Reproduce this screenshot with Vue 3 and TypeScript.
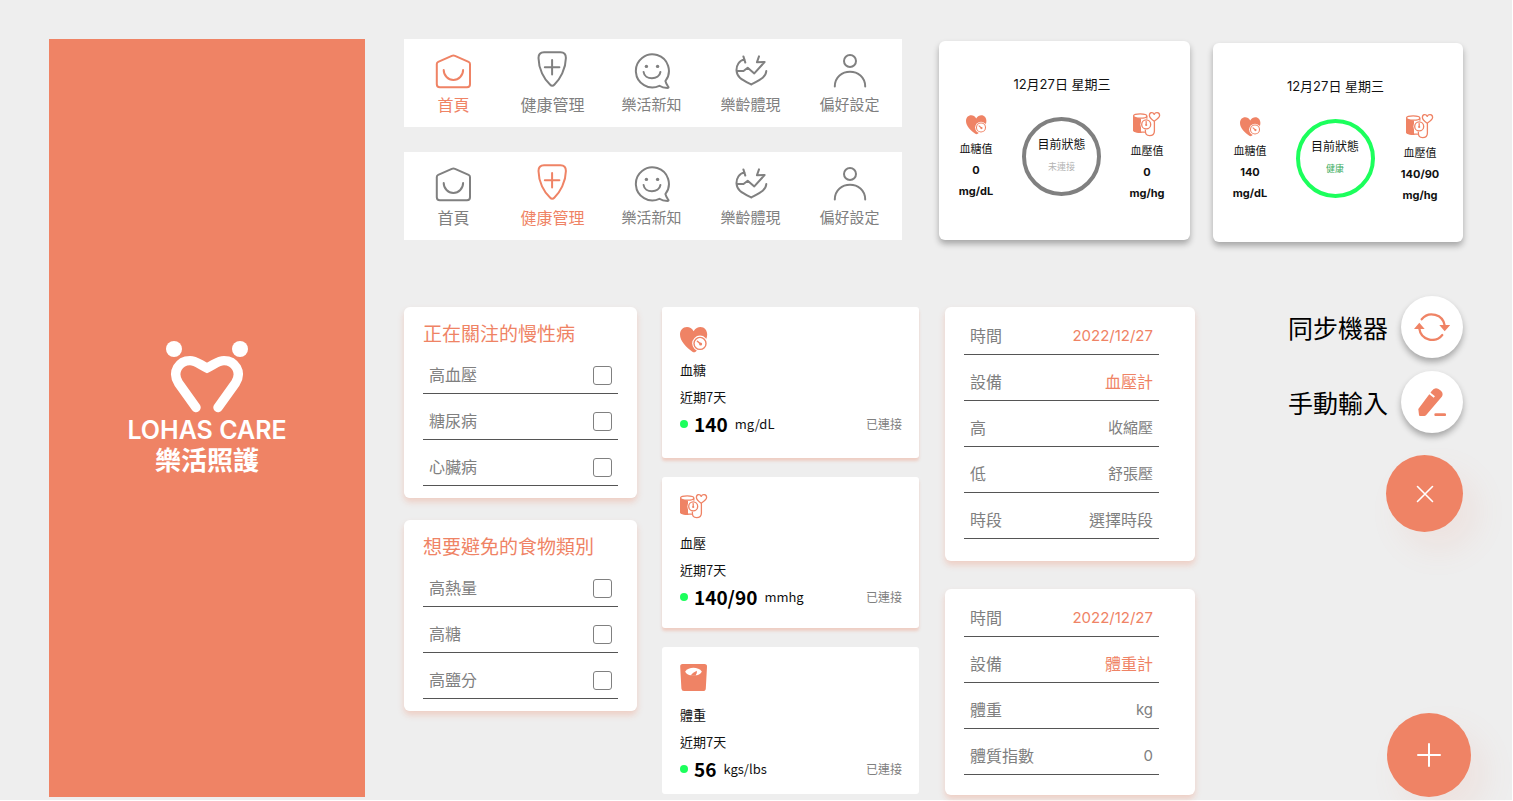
<script setup lang="ts">
import { h, ref, type FunctionalComponent } from 'vue'

type NavIcon = 'home' | 'shield' | 'chat' | 'pulse' | 'person'
type HealthIcon = 'sugar' | 'pressure' | 'weight'

interface NavItem { icon: NavIcon; label: string; large?: boolean }
interface Status { date: string; sugar: string; pressure: string; state: string; ok: boolean }
interface Reading { icon: HealthIcon; name: string; value: string; unit: string }
interface Field { id: string; label: string; kind: 'text' | 'select'; value?: string; placeholder?: string }

const navItems: NavItem[] = [
  { icon: 'home', label: '首頁', large: true },
  { icon: 'shield', label: '健康管理', large: true },
  { icon: 'chat', label: '樂活新知' },
  { icon: 'pulse', label: '樂齡體現' },
  { icon: 'person', label: '偏好設定' },
]
const navBars: NavIcon[] = ['home', 'shield']

const statuses: Status[] = [
  { date: '12月27日 星期三', sugar: '0', pressure: '0', state: '未連接', ok: false },
  { date: '12月27日 星期三', sugar: '140', pressure: '140/90', state: '健康', ok: true },
]

const checkLists = [
  { title: '正在關注的慢性病', items: ['高血壓', '糖尿病', '心臟病'] },
  { title: '想要避免的食物類別', items: ['高熱量', '高糖', '高鹽分'] },
]
const picked = ref<string[]>([])

const readings: Reading[] = [
  { icon: 'sugar', name: '血糖', value: '140', unit: 'mg/dL' },
  { icon: 'pressure', name: '血壓', value: '140/90', unit: 'mmhg' },
  { icon: 'weight', name: '體重', value: '56', unit: 'kgs/lbs' },
]

const forms: Field[][] = [
  [
    { id: 'bp-time', label: '時間', kind: 'text', value: '2022/12/27' },
    { id: 'bp-device', label: '設備', kind: 'select', value: '血壓計' },
    { id: 'bp-high', label: '高', kind: 'text', placeholder: '收縮壓' },
    { id: 'bp-low', label: '低', kind: 'text', placeholder: '舒張壓' },
    { id: 'bp-period', label: '時段', kind: 'select', placeholder: '選擇時段' },
  ],
  [
    { id: 'w-time', label: '時間', kind: 'text', value: '2022/12/27' },
    { id: 'w-device', label: '設備', kind: 'select', value: '體重計' },
    { id: 'w-weight', label: '體重', kind: 'text', placeholder: 'kg' },
    { id: 'w-bmi', label: '體質指數', kind: 'text', placeholder: '0' },
  ],
]

const ORANGE = '#ef8365'
const line = { fill: 'none', stroke: ORANGE, 'stroke-linecap': 'round', 'stroke-linejoin': 'round' }

const SugarIcon: FunctionalComponent = () =>
  h('svg', { viewBox: '0 0 28 26', 'aria-hidden': 'true' }, [
    h('path', { fill: ORANGE, d: 'M13.6 4.2C15.4 1.2 18 0 20.4 0C24.6 0 27.2 3.4 27.2 7.6C27.2 14.6 20.4 21 15.6 24.7Q14 25.8 12.4 24.7C6.6 20.6 0 14.4 0 7.6C0 3.2 2.8 0 7 0C9.6 0 12 1.4 13.6 4.2Z' }),
    h('circle', { cx: 20, cy: 16.4, r: 7.8, fill: '#fff' }),
    h('circle', { cx: 20, cy: 16.4, r: 6, ...line, 'stroke-width': 1.4 }),
    h('path', { d: 'M17.4 14.2L20.6 17', ...line, 'stroke-width': 1.5 }),
    h('circle', { cx: 20.6, cy: 17, r: 1.5, fill: ORANGE }),
  ])

const PressureIcon: FunctionalComponent = () =>
  h('svg', { viewBox: '0 0 28 25', 'aria-hidden': 'true' }, [
    h('path', { fill: ORANGE, d: 'M0 4.5L8 6.5V20.5C4 20.5 0 19.8 0 18.2Z' }),
    h('path', { d: 'M8 20.3C5 20.3 .6 19.6 .6 18V4.4M13.8 4.4V7.2', ...line, 'stroke-width': 1.3 }),
    h('ellipse', { cx: 7.2, cy: 4, rx: 6.6, ry: 2.2, fill: '#fff', stroke: ORANGE, 'stroke-width': 1.3 }),
    h('path', { d: 'M8.4 20.2H11.4', ...line, 'stroke-width': 1.3 }),
    h('circle', { cx: 13.2, cy: 12.4, r: 5.8, fill: '#fff' }),
    h('circle', { cx: 13.2, cy: 12.4, r: 4.5, ...line, 'stroke-width': 1.3 }),
    h('path', { d: 'M13.2 9.6V12.8', ...line, 'stroke-width': 1.3 }),
    h('circle', { cx: 13.2, cy: 13, r: 1.1, fill: ORANGE }),
    h('path', { d: 'M21.2 9.2C18.4 7.2 16.4 5.4 16.4 3.4C16.4 .2 20 -.2 21.2 2.4C22.4 -.2 26.6 .2 26.6 3.4C26.6 5.4 24 7.2 21.2 9.2ZM21.4 9.4V19C21.4 22.4 19.4 23.6 16.6 23.6C13.6 23.6 12.2 22.2 12.4 18.2', ...line, 'stroke-width': 1.3 }),
  ])

const WeightIcon: FunctionalComponent = () =>
  h('svg', { viewBox: '0 0 28 28', 'aria-hidden': 'true' }, [
    h('path', { fill: ORANGE, d: 'M2.6 0H24.4Q27.2 0 27 2.8L25.8 24.4Q25.6 27 23 27H4Q1.6 27 1.4 24.4L.2 2.8Q0 0 2.6 0Z' }),
    h('path', { fill: '#fff', d: 'M5.2 7.6C8.4 2.6 18.4 2.6 21.8 7.6C21 9.8 18.8 11 17 11.2H10C8 11 6 9.8 5.2 7.6Z' }),
    h('path', { fill: ORANGE, d: 'M10.6 11.6Q13 8.4 16.8 6.8Q17.4 9.6 15.6 11.6Z' }),
  ])

const healthIcons = { sugar: SugarIcon, pressure: PressureIcon, weight: WeightIcon }
</script>

<template>
  <div class="page">
    <aside class="splash">
      <svg class="logo" viewBox="0 0 82 72" aria-hidden="true">
        <circle cx="8" cy="8" r="8" fill="#fff" />
        <circle cx="74" cy="8" r="8" fill="#fff" />
        <path d="M30 66.500L12.500 42C5.500 31 13 19.600 24 19.600C29.500 19.600 32 22.400 41 27C50 22.400 52.500 19.600 58 19.600C69 19.600 76.500 31 69.500 42L52 66.500" fill="none" stroke="#fff" stroke-width="9.400" stroke-linecap="round" />
      </svg>
      <p class="brand">LOHAS CARE</p>
      <p class="brand-zh">樂活照護</p>
    </aside>

    <main class="board">
      <section class="top">
        <div class="navs">
          <nav v-for="active in navBars" :key="active" class="nav">
            <a v-for="item in navItems" :key="item.icon" href="#" class="nav-item" :class="{ active: item.icon === active, large: item.large }">
              <svg class="nav-icon" viewBox="0 0 40 40" aria-hidden="true">
                <template v-if="item.icon === 'home'">
                  <path d="M2.800 14Q2.800 12.400 4.200 11.800L17.800 5.800Q19.400 5.100 21 5.800L34.600 11.800Q36 12.400 36 14V34.300Q36 37.300 33 37.300H5.800Q2.800 37.300 2.800 34.300Z" />
                  <path d="M9.700 20A9.700 10 0 0 0 29.100 20" />
                </template>
                <template v-else-if="item.icon === 'shield'">
                  <path d="M11 2.300H27.500Q33 2.300 32.900 8C32.800 19 27 29 21.500 34.500Q19.200 37 17 34.500C11 29 5.600 19 5.500 8Q5.500 2.300 11 2.300Z" />
                  <path d="M11.800 17.300H26.400M19.100 10V24.600" />
                </template>
                <template v-else-if="item.icon === 'chat'">
                  <path d="M33.400 31A16.500 16.500 0 1 0 27.400 35.800Q30.500 38 35.500 38Q37.500 37.800 35.700 35.800Q34 33.500 33.400 31Z" />
                  <path d="M11.600 22C12.500 30.200 27.300 30.200 28.400 22" />
                  <circle class="dot" cx="14.400" cy="16.400" r="1.700" />
                  <circle class="dot" cx="25.600" cy="16.400" r="1.700" />
                </template>
                <template v-else-if="item.icon === 'pulse'">
                  <path d="M12.400 6.400L14.300 12.600M13.600 9.600C8 10.400 5.300 15.500 5.500 20.500C6 27.500 10.500 29.500 20.300 34.500C29.500 29.500 35 27 35.300 21" />
                  <path d="M6.500 21H12.500L16.700 17.700L23.300 23.400L33.600 12L25.900 12.300L28 6.400" />
                </template>
                <template v-else>
                  <circle cx="20" cy="11" r="6" />
                  <path d="M4.800 36.600C4.800 16.800 35.200 16.800 35.200 36.600" />
                </template>
              </svg>
              <span>{{ item.label }}</span>
            </a>
          </nav>
        </div>

        <article v-for="s in statuses" :key="s.state" class="status" :class="{ ok: s.ok }">
          <h2>{{ s.date }}</h2>
          <div class="vitals">
            <div class="vital">
              <SugarIcon class="ic-small" />
              <span>血糖值</span><b>{{ s.sugar }}</b><b>mg/dL</b>
            </div>
            <div class="ring">
              <span>目前狀態</span>
              <small>{{ s.state }}</small>
            </div>
            <div class="vital">
              <PressureIcon class="ic" />
              <span>血壓值</span><b>{{ s.pressure }}</b><b>mg/hg</b>
            </div>
          </div>
        </article>
      </section>

      <section class="bottom">
        <div class="col lists">
          <fieldset v-for="list in checkLists" :key="list.title" class="card check-card">
            <legend>{{ list.title }}</legend>
            <label v-for="item in list.items" :key="item" class="row">
              <span>{{ item }}</span>
              <input v-model="picked" type="checkbox" :value="item" />
            </label>
          </fieldset>
        </div>

        <div class="col readings">
          <article v-for="r in readings" :key="r.icon" class="card reading">
            <div class="reading-icon" :class="r.icon"><component :is="healthIcons[r.icon]" class="ic" /></div>
            <h3>{{ r.name }}</h3>
            <p>近期7天</p>
            <div class="measure">
              <i class="online"></i>
              <strong>{{ r.value }}</strong>
              <span>{{ r.unit }}</span>
              <em>已連接</em>
            </div>
          </article>
        </div>

        <div class="col details">
          <form v-for="(form, i) in forms" :key="i" class="card detail" @submit.prevent>
            <div v-for="f in form" :key="f.id" class="row">
              <label :for="f.id">{{ f.label }}</label>
              <select v-if="f.kind === 'select'" :id="f.id" :class="{ filled: f.value }">
                <option>{{ f.value ?? f.placeholder }}</option>
              </select>
              <input v-else :id="f.id" type="text" :value="f.value" :placeholder="f.placeholder" :class="{ filled: f.value }" />
            </div>
          </form>
        </div>

        <div class="actions">
          <div class="action">
            <span id="sync-label">同步機器</span>
            <button type="button" class="fab white" aria-labelledby="sync-label">
              <svg width="36" height="28" viewBox="0 0 36 28" aria-hidden="true">
                <path d="M7.700 6.300A13 13 0 0 1 30.700 12.500M5.300 15.500A13 13 0 0 0 28.300 22" fill="none" stroke="#ef8365" stroke-width="2.200" stroke-linecap="round" />
                <path d="M25.300 12H36.300L30.700 18.300ZM0 16H10.700L5.300 9.700Z" fill="#ef8365" />
              </svg>
            </button>
          </div>
          <div class="action">
            <span id="manual-label">手動輸入</span>
            <button type="button" class="fab white" aria-labelledby="manual-label">
              <svg width="28" height="28" viewBox="0 0 28 28" aria-hidden="true">
                <path d="M.3 21L13.700 3Q16.500 -1 20.500 1Q26.200 4.200 24 8.400L8 27.300Q7.300 28 6.300 28H2Q1.100 28 1 27Z" fill="#ef8365" />
                <path d="M9.800 3.800L16.300 9" stroke="#fff" stroke-width="2" />
                <path d="M17.700 26.700H26.700" stroke="#ef8365" stroke-width="2.800" stroke-linecap="round" />
              </svg>
            </button>
          </div>
          <button type="button" class="fab close" aria-label="關閉">
            <svg width="18" height="18" viewBox="0 0 18 18" aria-hidden="true"><path d="M1.500 1.500L16.500 16.500M16.500 1.500L1.500 16.500" stroke="#fff" stroke-width="1.600" stroke-linecap="round" /></svg>
          </button>
          <button type="button" class="fab add" aria-label="新增">
            <svg width="24" height="24" viewBox="0 0 24 24" aria-hidden="true"><path d="M1 12H23M12 1V23" stroke="#fff" stroke-width="2" stroke-linecap="round" /></svg>
          </button>
        </div>
      </section>
    </main>
  </div>
</template>

<style>
body {
  margin: 0;
  background: #fff;
}
</style>

<style scoped>
.page {
  box-sizing: border-box;
  min-height: 100vh;
  display: grid;
  grid-template-columns: minmax(0, 316fr) minmax(0, 1067fr);
  gap: 39px;
  padding: 39px 41px 3px 49px;
  border-right: 1px solid #fff;
  border-bottom: 1px solid #fff;
  background: #eee;
  color: #111;
  font-family: Inter, "Noto Sans CJK TC", sans-serif;
}
h2, h3, p { margin: 0; font-weight: 400; }
svg { display: block; }

.splash {
  display: flex;
  flex-direction: column;
  align-items: center;
  justify-content: center;
  padding-bottom: 18px;
  background: #ef8365;
  color: #fff;
}
.logo { width: 82px; height: 72px; margin-bottom: 3px; }
.brand { font-size: 25px; line-height: 29px; font-weight: 600; }
.brand-zh { font-size: 26px; line-height: 32px; font-weight: 700; }

.board { display: flex; flex-direction: column; gap: 65px; }
.top {
  display: grid;
  grid-template-columns: minmax(0, 498fr) 37px minmax(0, 251fr) 23px minmax(0, 250fr);
  align-items: start;
  padding-right: 8px;
}
.navs { display: grid; gap: 25px; }
.nav {
  display: grid;
  grid-template-columns: repeat(5, minmax(0, 1fr));
  padding: 11px 3px 12px 0;
  background: #fff;
}
.nav-item {
  display: flex;
  flex-direction: column;
  align-items: center;
  gap: 5px;
  color: #808080;
  font-size: 15px;
  line-height: 20px;
  text-decoration: none;
  white-space: nowrap;
}
.nav-item.large { font-size: 16px; }
.nav-item.active { color: #ef8365; }
.nav-icon {
  width: 40px;
  height: 40px;
  fill: none;
  stroke: currentColor;
  stroke-width: 2;
  stroke-linecap: round;
  stroke-linejoin: round;
}
.dot { fill: currentColor; stroke: none; }

.status {
  grid-column: 3;
  margin-top: 2px;
  padding: 33px 0 36px;
  border-radius: 6px;
  background: #fff;
  box-shadow: 0 4px 6px rgba(0, 0, 0, 0.3);
}
.status.ok { grid-column: 5; margin-top: 4px; }
.status h2 { padding-right: 5px; font-size: 13px; line-height: 20px; text-align: center; }
.vitals {
  display: flex;
  align-items: center;
  justify-content: space-between;
  margin-top: 18px;
  padding: 0 19px 0 13px;
}
.vital {
  width: 48px;
  display: flex;
  flex-direction: column;
  align-items: center;
  font-size: 11px;
  line-height: 21px;
}
.vital svg { margin-bottom: 4px; }
.vital b { font-weight: 700; }
.ic-small { width: 21px; height: 20px; }
.ic { width: 28px; height: auto; }
.ring {
  box-sizing: border-box;
  width: 79px;
  height: 79px;
  display: flex;
  flex-direction: column;
  align-items: center;
  justify-content: center;
  gap: 4px;
  margin-bottom: 4px;
  border: 4px solid #808080;
  border-radius: 50%;
  font-size: 12px;
  line-height: 18px;
}
.ring small { color: #b3b3b3; font-size: 9px; }
.ok .ring { border-color: #1cff5c; }
.ok .ring small { color: #3fae64; }

.bottom {
  flex: 1;
  display: grid;
  grid-template-columns: minmax(0, 233fr) 25px minmax(0, 257fr) 26px minmax(0, 250fr) minmax(0, 93fr) auto;
}
.col { display: flex; flex-direction: column; }
.lists { grid-column: 1; gap: 22px; }
.readings { grid-column: 3; gap: 19px; }
.details { grid-column: 5; gap: 28px; }
.card {
  box-sizing: border-box;
  margin: 0;
  border: 0;
  border-radius: 6px;
  background: #fff;
  box-shadow: 0 4px 6px rgba(239, 131, 101, 0.3);
}
.check-card { min-width: 0; padding: 14px 19px 12px; }
.check-card legend {
  float: left;
  width: 100%;
  padding: 0;
  color: #ef8365;
  font-size: 19px;
  line-height: 27px;
}
.row {
  box-sizing: border-box;
  clear: both;
  height: 46px;
  display: flex;
  align-items: center;
  justify-content: space-between;
  padding: 10px 6px 0;
  border-bottom: 1px solid #555;
  color: #808080;
  font-size: 16px;
  line-height: 22px;
}
.check-card .row span, .detail label { padding-bottom: 2px; }
.row input[type="checkbox"] {
  appearance: none;
  width: 19px;
  height: 19px;
  margin: 0;
  border: 1px solid #808080;
  border-radius: 3px;
  background: #fff;
}
.row input[type="checkbox"]:checked { background: #ef8365; }

.reading {
  padding: 17px 17px 11px 18px;
  border-radius: 3px;
  box-shadow: 0 3px 3px rgba(239, 131, 101, 0.3);
  font-family: "Noto Sans CJK TC", sans-serif;
  font-size: 13px;
}
.reading:not(:last-child) { min-height: 151px; }
.reading:last-child { box-shadow: none; }
.reading-icon { height: 32px; }
.reading-icon.sugar { box-sizing: border-box; padding-top: 3px; }
.reading-icon.pressure { height: 35px; }
.reading-icon.weight { height: 37px; }
.reading h3, .reading p { font-size: 13px; line-height: 27px; }
.measure { display: flex; align-items: center; line-height: 28px; }
.online { width: 8px; height: 8px; margin-right: 6px; border-radius: 50%; background: #1cff5c; }
.measure strong { margin-right: 7px; color: #000; font-size: 19px; }
.measure em { margin-left: auto; color: #808080; font-size: 12px; font-style: normal; }

.detail { padding: 2px 36px 22px 19px; }
.detail:last-child { padding-bottom: 20px; }
.detail label { white-space: nowrap; }
.detail input, .detail select {
  appearance: none;
  min-width: 0;
  width: 100px;
  padding: 0 0 2px;
  border: 0;
  background: transparent;
  color: #808080;
  font: inherit;
  text-align: right;
  text-align-last: right;
}
.detail input { font-size: 15px; }
.detail input::placeholder { color: #808080; opacity: 1; }
.detail .filled { color: #ef8365; }

.actions {
  grid-column: 7;
  display: flex;
  flex-direction: column;
  align-items: flex-end;
  margin-top: -11px;
}
.action {
  display: flex;
  align-items: center;
  gap: 13px;
  margin: 0 8px 13px 0;
  font-size: 25px;
  color: #000;
}
.fab {
  display: flex;
  align-items: center;
  justify-content: center;
  padding: 0;
  border: 0;
  border-radius: 50%;
  background: #ef8365;
  box-shadow: 14px 18px 32px rgba(239, 131, 101, 0.1);
}
.fab.white {
  width: 62px;
  height: 62px;
  background: #fff;
  box-shadow: 0 4px 6px rgba(0, 0, 0, 0.3);
}
.fab.close { width: 77px; height: 77px; margin: 9px 8px 0 0; }
.fab.add { width: 84px; height: 84px; margin-top: auto; }
</style>
